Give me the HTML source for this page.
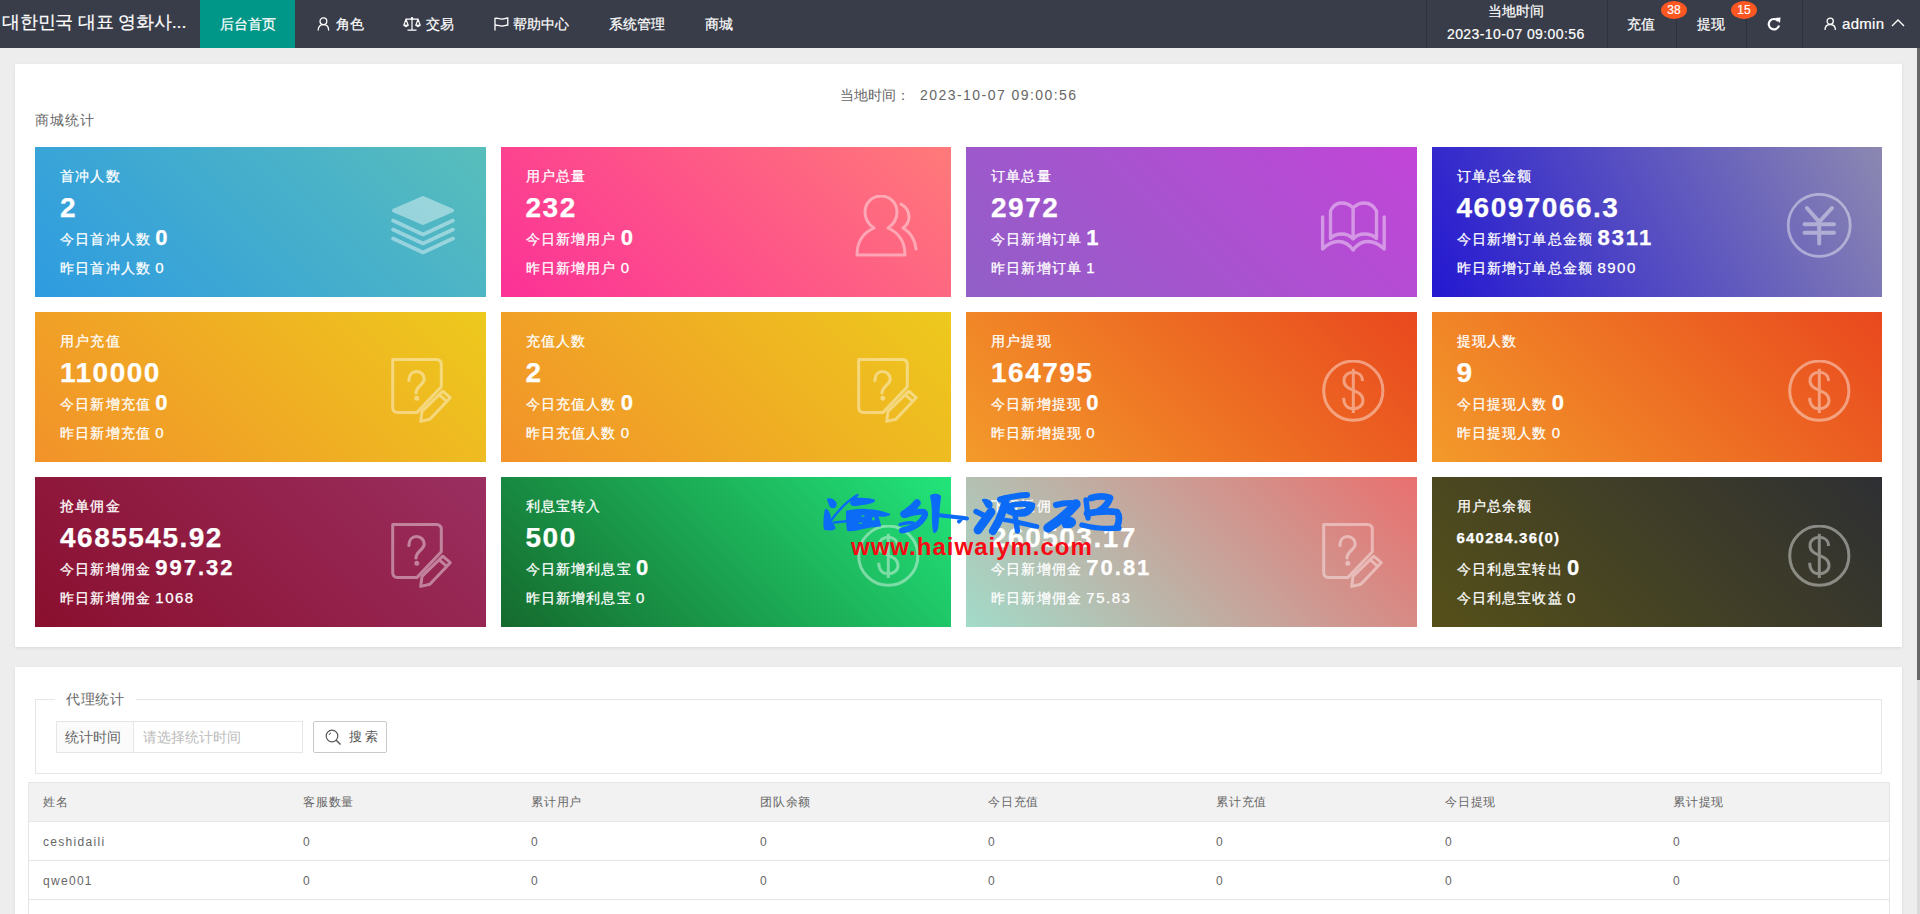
<!DOCTYPE html>
<html><head><meta charset="utf-8">
<style>
*{box-sizing:border-box;margin:0;padding:0}
html,body{width:1920px;height:914px;overflow:hidden}
body{font-family:"Liberation Sans",sans-serif;background:#EDEDED;position:relative;color:#666;font-size:14px}
.hd{position:absolute;left:0;top:0;width:1920px;height:48px;background:#393D49;color:#fff;-webkit-text-stroke:.2px #fff}
.logo{position:absolute;left:2px;top:-1px;height:48px;line-height:46px;font-size:18px;letter-spacing:-.2px;color:#fff;white-space:nowrap}
.ni{position:absolute;top:0;height:48px;line-height:48px;font-size:14px;color:#fff;white-space:nowrap}
.ni.act{background:#009688}
.hic{position:absolute}
.sep{position:absolute;top:0;width:1px;height:48px;background:#2F323C}
.r{position:absolute;color:#fff;white-space:nowrap;font-size:14px}
.badge{position:absolute;top:1px;height:18px;width:26px;border-radius:13px/9px;background:#FF5722;color:#fff;font-size:12px;line-height:18px;text-align:center}
.sb{position:absolute;left:1917px;top:48px;width:3px;height:866px;background:#DADADA}
.sbt{position:absolute;left:1917px;top:48px;width:3px;height:632px;background:#666}
.panel{position:absolute;left:15px;width:1887px;background:#fff;box-shadow:0 1px 3px rgba(0,0,0,.09)}
.card{position:absolute;width:450.5px;height:150px;color:#fff;overflow:hidden;-webkit-text-stroke:.25px #fff}
.card .t{position:absolute;left:25px;top:21px;font-size:14px;line-height:16px;white-space:nowrap;letter-spacing:1.2px}
.card .n{position:absolute;left:25px;top:46px;font-size:28px;font-weight:bold;line-height:30px;white-space:nowrap;letter-spacing:1.5px}
.card .n.small{font-size:15px;top:46px;letter-spacing:1.2px}
.card .l1{position:absolute;left:25px;top:82px;font-size:14px;line-height:20px;white-space:nowrap;letter-spacing:1.2px}
.card .l1 b{margin-left:-1px;font-size:22px;vertical-align:top;line-height:18px;position:relative;top:0;letter-spacing:2px}
.card .l2{position:absolute;left:25px;top:113px;font-size:14px;line-height:16px;white-space:nowrap;letter-spacing:1.2px}
.card .v2{margin-left:-1px;font-size:15px;letter-spacing:1.5px}
.card svg.ic{position:absolute}
.title1{position:absolute;left:840px;top:87px;font-size:14px;line-height:16px;color:#666;white-space:nowrap}
.title2{position:absolute;left:35px;top:112px;font-size:14px;line-height:16px;color:#666;letter-spacing:1px}
.fs{position:absolute;left:35px;top:699px;width:1847px;height:75px;border:1px solid #E6E6E6}
.legend{position:absolute;left:55px;top:690px;padding:0 11px;background:#fff;font-size:14px;line-height:18px;color:#666;letter-spacing:.7px}
.ig{position:absolute;left:56px;top:721px;width:247px;height:32px;border:1px solid #E6E6E6}
.ig .lab{position:absolute;left:0;top:0;width:77px;height:30px;background:#FBFBFB;border-right:1px solid #E6E6E6;line-height:30px;text-align:center;color:#666;text-indent:-4px}
.ig .ph{position:absolute;left:86px;top:0;line-height:30px;color:#BBB}
.btn{position:absolute;left:313px;top:721px;width:74px;height:32px;border:1px solid #C9C9C9;border-radius:2px;line-height:30px;color:#555;font-size:13px}
.tbl{position:absolute;left:28px;top:782px;width:1862px;height:140px;border:1px solid #E6E6E6;border-bottom:none}
.thbg{position:absolute;left:29px;top:783px;width:1860px;height:38px;background:#F2F2F2}
.hl{position:absolute;left:29px;width:1860px;height:1px;background:#E6E6E6}
.th,.td{position:absolute;font-size:12px;line-height:14px;color:#666;white-space:nowrap}
.th{top:795px;letter-spacing:.8px}
.td{margin-top:13px;letter-spacing:1.3px}
.wm1{position:absolute;left:836px;top:492px;font-size:40px;color:#0B6BF6;font-weight:bold;letter-spacing:8.5px;white-space:nowrap;line-height:44px;transform-origin:0 0;transform:scale(1.55,0.95) skewX(-12deg)}
.wm2{position:absolute;left:851px;top:534px;font-size:24px;color:#F70A14;font-weight:bold;white-space:nowrap;line-height:26px;letter-spacing:1px}
</style></head><body>
<div class="hd">
  <div class="logo">대한민국 대표 영화사...</div>
  <div class="ni act" style="left:200px;width:95px;text-align:center">后台首页</div>
  <svg class="hic" style="left:317px;top:17px" width="13" height="14" viewBox="0 0 13 14"><circle cx="6.4" cy="4.3" r="3.4" fill="none" stroke="#fff" stroke-width="1.3"/><path d="M1.2 13 C1.2 9.3 3.5 7.6 6.4 7.6 C9.3 7.6 11.6 9.3 11.6 13" fill="none" stroke="#fff" stroke-width="1.3" stroke-linecap="round"/></svg>
  <div class="ni" style="left:336px">角色</div>
  <svg class="hic" style="left:403px;top:17px" width="18" height="14" viewBox="0 0 18 14"><path d="M9 1.5 L9 13 M4.5 13.2 L13.5 13.2 M2.5 2.2 L15.5 2.2 M3 2.2 L0.9 8 M3 2.2 L5.1 8 M15 2.2 L12.9 8 M15 2.2 L17.1 8" fill="none" stroke="#fff" stroke-width="1.2"/><circle cx="9" cy="1.3" r="1.2" fill="#fff"/><path d="M0.4 8 L5.6 8 Q3 11.5 0.4 8 Z M12.4 8 L17.6 8 Q15 11.5 12.4 8 Z" fill="#fff" stroke="#fff" stroke-width=".8"/></svg>
  <div class="ni" style="left:426px">交易</div>
  <svg class="hic" style="left:494px;top:17px" width="15" height="14" viewBox="0 0 15 14"><path d="M1 0.8 L1 13.5 M1 1.5 C4 0.5 6 2.5 8.5 2 C10.5 1.7 12 1 13.8 1 L13.8 8 C12 8 10.5 8.7 8.5 9 C6 9.5 4 7.5 1 8.5" fill="none" stroke="#fff" stroke-width="1.3"/></svg>
  <div class="ni" style="left:513px">帮助中心</div>
  <div class="ni" style="left:609px">系统管理</div>
  <div class="ni" style="left:705px">商城</div>
  <div class="sep" style="left:1426px"></div>
  <div class="sep" style="left:1607px"></div>
  <div class="sep" style="left:1676px"></div>
  <div class="sep" style="left:1746px"></div>
  <div class="sep" style="left:1802px"></div>
  <div class="r" style="left:1488px;top:3px;line-height:16px">当地时间</div>
  <div class="r" style="left:1447px;top:26px;line-height:16px;letter-spacing:.4px">2023-10-07 09:00:56</div>
  <div class="r" style="left:1627px;top:16px;line-height:16px">充值</div>
  <div class="badge" style="left:1661px">38</div>
  <div class="r" style="left:1697px;top:16px;line-height:16px">提现</div>
  <div class="badge" style="left:1731px">15</div>
  <svg class="hic" style="left:1767px;top:17px" width="14" height="14" viewBox="0 0 14 14"><path d="M11.2 4.2 A5.2 5.2 0 1 0 12 8.5" fill="none" stroke="#fff" stroke-width="2.2"/><path d="M8 1 L13.5 0.5 L13 6 Z" fill="#fff"/></svg>
  <svg class="hic" style="left:1824px;top:17px" width="13" height="14" viewBox="0 0 13 14"><circle cx="6.2" cy="4.2" r="3.1" fill="none" stroke="#fff" stroke-width="1.3"/><path d="M1 13 C1 9.5 3.3 7.5 6.2 7.5 C9.1 7.5 11.4 9.5 11.4 13" fill="none" stroke="#fff" stroke-width="1.3"/></svg>
  <div class="r" style="left:1842px;top:15px;font-size:15px;line-height:18px;letter-spacing:.3px">admin</div>
  <svg class="hic" style="left:1891px;top:18px" width="14" height="9" viewBox="0 0 14 9"><path d="M1 8 L7 2 L13 8" fill="none" stroke="#fff" stroke-width="1.4"/></svg>
</div>
<div class="sb"></div><div class="sbt"></div>

<div class="panel" style="top:64px;height:583px"></div>
<div class="title1">当地时间：</div><div class="title1" style="left:920px;letter-spacing:1.45px">2023-10-07 09:00:56</div>
<div class="title2">商城统计</div>
<div class="card" style="left:35px;top:147px;background:linear-gradient(45deg,#2E9BE1,#58BEBB)">
<div class="t">首冲人数</div><div class="n">2</div>
<div class="l1">今日首冲人数 <b>0</b></div><div class="l2">昨日首冲人数 <span class="v2">0</span></div>
<svg class="ic" style="left:354px;top:49px" width="68" height="62" viewBox="0 0 68 62"><g opacity=".42" fill="none" stroke="#fff" stroke-linecap="round" stroke-linejoin="round"><path d="M34 2 L63 14.5 L34 27 L5 14.5 Z" fill="#fff" stroke-width="4"/><path d="M4 24.5 L34 38.5 L64 24.5 M4 33.5 L34 47.5 L64 33.5 M4 42.5 L34 56.5 L64 42.5" stroke-width="3.6"/></g></svg></div>
<div class="card" style="left:500.5px;top:147px;background:linear-gradient(45deg,#FC3197,#FF7A79)">
<div class="t">用户总量</div><div class="n">232</div>
<div class="l1">今日新增用户 <b>0</b></div><div class="l2">昨日新增用户 <span class="v2">0</span></div>
<svg class="ic" style="left:350px;top:48px" width="72" height="64" viewBox="0 0 72 64"><g opacity=".42" fill="none" stroke="#fff" stroke-linecap="round" stroke-linejoin="round"><path d="M6 60 C6 45 14 37 23 33 C17 29 14 23 14 17 C14 8 21 1 30 1 C39 1 46 8 46 17 C46 23 43 29 37 33 C46 37 54 45 54 60 Z" stroke-width="3"/><path d="M50 9 C55 12 58 16 58 22 C58 27 56 30 52 33 C59 37 64 45 65 54" stroke-width="3"/></g></svg></div>
<div class="card" style="left:966px;top:147px;background:linear-gradient(45deg,#915FC7,#C245D8)">
<div class="t">订单总量</div><div class="n">2972</div>
<div class="l1">今日新增订单 <b>1</b></div><div class="l2">昨日新增订单 <span class="v2">1</span></div>
<svg class="ic" style="left:354px;top:54px" width="68" height="54" viewBox="0 0 68 54"><g opacity=".42" fill="none" stroke="#fff" stroke-linecap="round" stroke-linejoin="round"><path d="M2.6 16 L2.6 48 C8 42.5 13.5 40.5 18.5 40.5 C25 40.5 29.5 44 33.1 49 C36.7 44 41.5 40.5 47.7 40.5 C53 40.5 58.5 42.5 64.2 48 L64.2 16" stroke-width="3.4"/><path d="M10.5 37.5 L10.5 10 C13 4.5 17 2 21.5 2 C26.5 2 30.5 4 33.1 7 C35.7 4 39.7 2 44.7 2 C49.5 2 53.5 4.5 56.5 10 L56.5 37.5 C53 34 49 33 44.7 33 C39.5 33 35.5 35 33.1 38 C30.7 35 26.5 33 21.5 33 C17 33 13.5 34 10.5 37.5 Z M33.1 7 L33.1 37.5" stroke-width="3.4"/></g></svg></div>
<div class="card" style="left:1431.5px;top:147px;background:linear-gradient(63deg,#2418D1,#8C88B1)">
<div class="t">订单总金额</div><div class="n">46097066.3</div>
<div class="l1">今日新增订单总金额 <b>8311</b></div><div class="l2">昨日新增订单总金额 <span class="v2">8900</span></div>
<svg class="ic" style="left:354px;top:46px" width="68" height="68" viewBox="0 0 68 68"><g opacity=".42" fill="none" stroke="#fff" stroke-linecap="round" stroke-linejoin="round"><circle cx="33.2" cy="32.3" r="31" stroke-width="2.8"/><path d="M20.9 15 L33.2 28.8 L46 15 M33.2 28.8 L33.2 50.5 M18.5 31.3 L48 31.3 M18.5 39.7 L48 39.7" stroke-width="4"/></g></svg></div>
<div class="card" style="left:35px;top:312px;background:linear-gradient(45deg,#F2922A,#EDC91D)">
<div class="t">用户充值</div><div class="n">110000</div>
<div class="l1">今日新增充值 <b>0</b></div><div class="l2">昨日新增充值 <span class="v2">0</span></div>
<svg class="ic" style="left:354px;top:46px" width="68" height="68" viewBox="0 0 68 68"><g opacity=".42" fill="none" stroke="#fff" stroke-linecap="round" stroke-linejoin="round"><path d="M27.8 54.6 L8.7 54.6 Q3.7 54.6 3.7 49.6 L3.7 1.6 L47.3 1.6 Q52.3 1.6 52.3 6.6 L52.3 28.8 Z" stroke-width="3"/><path d="M19.9 22.5 C19.9 16.5 23.5 13.5 27.5 13.5 C31.8 13.5 35.2 16.5 35.2 21 C35.2 26.5 27 28.5 27 34.9" stroke-width="3.2"/><circle cx="27.8" cy="40.2" r="1.6" fill="#fff" stroke-width="1.8"/><path d="M53.8 33.2 L61.2 39.7 L40.9 61.2 L31.7 63.4 L33 53.3 Z M50.35 36.8 L57.75 43.3" stroke-width="3"/></g></svg></div>
<div class="card" style="left:500.5px;top:312px;background:linear-gradient(45deg,#F2922A,#EDC91D)">
<div class="t">充值人数</div><div class="n">2</div>
<div class="l1">今日充值人数 <b>0</b></div><div class="l2">昨日充值人数 <span class="v2">0</span></div>
<svg class="ic" style="left:354px;top:46px" width="68" height="68" viewBox="0 0 68 68"><g opacity=".42" fill="none" stroke="#fff" stroke-linecap="round" stroke-linejoin="round"><path d="M27.8 54.6 L8.7 54.6 Q3.7 54.6 3.7 49.6 L3.7 1.6 L47.3 1.6 Q52.3 1.6 52.3 6.6 L52.3 28.8 Z" stroke-width="3"/><path d="M19.9 22.5 C19.9 16.5 23.5 13.5 27.5 13.5 C31.8 13.5 35.2 16.5 35.2 21 C35.2 26.5 27 28.5 27 34.9" stroke-width="3.2"/><circle cx="27.8" cy="40.2" r="1.6" fill="#fff" stroke-width="1.8"/><path d="M53.8 33.2 L61.2 39.7 L40.9 61.2 L31.7 63.4 L33 53.3 Z M50.35 36.8 L57.75 43.3" stroke-width="3"/></g></svg></div>
<div class="card" style="left:966px;top:312px;background:linear-gradient(45deg,#F39A2A,#E9481E)">
<div class="t">用户提现</div><div class="n">164795</div>
<div class="l1">今日新增提现 <b>0</b></div><div class="l2">昨日新增提现 <span class="v2">0</span></div>
<svg class="ic" style="left:356px;top:48px" width="66" height="66" viewBox="0 0 66 66"><g opacity=".42" fill="none" stroke="#fff" stroke-linecap="round" stroke-linejoin="round"><circle cx="31.3" cy="30.7" r="29.6" stroke-width="3"/><path d="M40.5 21 C40.5 15.5 36.5 12.3 31.3 12.3 C25.5 12.3 22 16 22 20.5 C22 26.5 27 28.5 31.3 30.3 C36 32.2 41 34.5 41 40.5 C41 45.5 36.5 48.7 31.3 48.7 C25.5 48.7 21.7 45 21.7 37.7" stroke-width="3" stroke-linecap="butt"/><path d="M31.3 8.8 L31.3 53" stroke-width="3" stroke-linecap="butt"/></g></svg></div>
<div class="card" style="left:1431.5px;top:312px;background:linear-gradient(45deg,#F39A2A,#E9481E)">
<div class="t">提现人数</div><div class="n">9</div>
<div class="l1">今日提现人数 <b>0</b></div><div class="l2">昨日提现人数 <span class="v2">0</span></div>
<svg class="ic" style="left:356px;top:48px" width="66" height="66" viewBox="0 0 66 66"><g opacity=".42" fill="none" stroke="#fff" stroke-linecap="round" stroke-linejoin="round"><circle cx="31.3" cy="30.7" r="29.6" stroke-width="3"/><path d="M40.5 21 C40.5 15.5 36.5 12.3 31.3 12.3 C25.5 12.3 22 16 22 20.5 C22 26.5 27 28.5 31.3 30.3 C36 32.2 41 34.5 41 40.5 C41 45.5 36.5 48.7 31.3 48.7 C25.5 48.7 21.7 45 21.7 37.7" stroke-width="3" stroke-linecap="butt"/><path d="M31.3 8.8 L31.3 53" stroke-width="3" stroke-linecap="butt"/></g></svg></div>
<div class="card" style="left:35px;top:477px;background:linear-gradient(45deg,#8A0F2E,#9A2F60)">
<div class="t">抢单佣金</div><div class="n">4685545.92</div>
<div class="l1">今日新增佣金 <b>997.32</b></div><div class="l2">昨日新增佣金 <span class="v2">1068</span></div>
<svg class="ic" style="left:354px;top:46px" width="68" height="68" viewBox="0 0 68 68"><g opacity=".42" fill="none" stroke="#fff" stroke-linecap="round" stroke-linejoin="round"><path d="M27.8 54.6 L8.7 54.6 Q3.7 54.6 3.7 49.6 L3.7 1.6 L47.3 1.6 Q52.3 1.6 52.3 6.6 L52.3 28.8 Z" stroke-width="3"/><path d="M19.9 22.5 C19.9 16.5 23.5 13.5 27.5 13.5 C31.8 13.5 35.2 16.5 35.2 21 C35.2 26.5 27 28.5 27 34.9" stroke-width="3.2"/><circle cx="27.8" cy="40.2" r="1.6" fill="#fff" stroke-width="1.8"/><path d="M53.8 33.2 L61.2 39.7 L40.9 61.2 L31.7 63.4 L33 53.3 Z M50.35 36.8 L57.75 43.3" stroke-width="3"/></g></svg></div>
<div class="card" style="left:500.5px;top:477px;background:linear-gradient(45deg,#156A2D,#22E57A)">
<div class="t">利息宝转入</div><div class="n">500</div>
<div class="l1">今日新增利息宝 <b>0</b></div><div class="l2">昨日新增利息宝 <span class="v2">0</span></div>
<svg class="ic" style="left:356px;top:48px" width="66" height="66" viewBox="0 0 66 66"><g opacity=".42" fill="none" stroke="#fff" stroke-linecap="round" stroke-linejoin="round"><circle cx="31.3" cy="30.7" r="29.6" stroke-width="3"/><path d="M40.5 21 C40.5 15.5 36.5 12.3 31.3 12.3 C25.5 12.3 22 16 22 20.5 C22 26.5 27 28.5 31.3 30.3 C36 32.2 41 34.5 41 40.5 C41 45.5 36.5 48.7 31.3 48.7 C25.5 48.7 21.7 45 21.7 37.7" stroke-width="3" stroke-linecap="butt"/><path d="M31.3 8.8 L31.3 53" stroke-width="3" stroke-linecap="butt"/></g></svg></div>
<div class="card" style="left:966px;top:477px;background:linear-gradient(45deg,#A2DBC9,#E9706F)">
<div class="t">下级返佣</div><div class="n">260503.17</div>
<div class="l1">今日新增佣金 <b>70.81</b></div><div class="l2">昨日新增佣金 <span class="v2">75.83</span></div>
<svg class="ic" style="left:354px;top:46px" width="68" height="68" viewBox="0 0 68 68"><g opacity=".42" fill="none" stroke="#fff" stroke-linecap="round" stroke-linejoin="round"><path d="M27.8 54.6 L8.7 54.6 Q3.7 54.6 3.7 49.6 L3.7 1.6 L47.3 1.6 Q52.3 1.6 52.3 6.6 L52.3 28.8 Z" stroke-width="3"/><path d="M19.9 22.5 C19.9 16.5 23.5 13.5 27.5 13.5 C31.8 13.5 35.2 16.5 35.2 21 C35.2 26.5 27 28.5 27 34.9" stroke-width="3.2"/><circle cx="27.8" cy="40.2" r="1.6" fill="#fff" stroke-width="1.8"/><path d="M53.8 33.2 L61.2 39.7 L40.9 61.2 L31.7 63.4 L33 53.3 Z M50.35 36.8 L57.75 43.3" stroke-width="3"/></g></svg></div>
<div class="card" style="left:1431.5px;top:477px;background:linear-gradient(45deg,#555019,#2E2F33)">
<div class="t">用户总余额</div><div class="n small">640284.36(0)</div>
<div class="l1">今日利息宝转出 <b>0</b></div><div class="l2">今日利息宝收益 <span class="v2">0</span></div>
<svg class="ic" style="left:356px;top:48px" width="66" height="66" viewBox="0 0 66 66"><g opacity=".42" fill="none" stroke="#fff" stroke-linecap="round" stroke-linejoin="round"><circle cx="31.3" cy="30.7" r="29.6" stroke-width="3"/><path d="M40.5 21 C40.5 15.5 36.5 12.3 31.3 12.3 C25.5 12.3 22 16 22 20.5 C22 26.5 27 28.5 31.3 30.3 C36 32.2 41 34.5 41 40.5 C41 45.5 36.5 48.7 31.3 48.7 C25.5 48.7 21.7 45 21.7 37.7" stroke-width="3" stroke-linecap="butt"/><path d="M31.3 8.8 L31.3 53" stroke-width="3" stroke-linecap="butt"/></g></svg></div>
<svg style="position:absolute;left:815px;top:484px" width="315" height="60" viewBox="0 0 315 60"><g fill="#0B6BF6" stroke="#0B6BF6" stroke-linecap="round" stroke-linejoin="round">
<path stroke-width="2.20" d="M13 15.5 C16 14.5 21 17 20.5 21 C20 24 16 23.5 15 21 C14.5 19 14 17 13 15.5 Z"/>
<path stroke-width="2.20" d="M11 26 C13 27 14.5 30 15 35 C16 38 18 41 19.5 44 C18 46 14 45.5 10 45 C9 41 9.5 36 10 32 C10.3 29 10.5 27 11 26 Z"/>
<path fill="none" stroke-width="2.43" d="M15 38 C22 28 32 17 42.5 11"/>
<path stroke-width="2.20" d="M36 19 C37 15 40 13.5 43 14.5 C48 15.5 54 14.5 59 16.5 C58 19 50 19.5 44 20.5 C40 21.5 37 22 36 19 Z"/>
<path stroke-width="2.20" fill-rule="evenodd" d="M32 27.5 C40 26 48 25.5 52 26 C60 26.5 68 28 74 30.5 C70 32 64 31.5 62 31 L65 41.5 C58 42 52 43 48 44 C42 45.5 36 47 33 46 C32 40 32 33 32 27.5 Z M45.5 30.5 L51 29.8 L50 33.5 L45 34 Z M42.5 38 L48.5 36.8 L48 40.5 L42.5 41 Z M56 32.5 L60.5 32 L61 37 L56 37.5 Z"/>
<path fill="none" stroke-width="2.43" d="M19 38.5 L34 37"/>
<path fill="none" stroke-width="7.43" d="M102 19 C99 23 94 27 89 30"/>
<path fill="none" stroke-width="6.08" d="M90 31 C96 29 103 27 109 28 C112 30 108 36 103 40 C98 43.5 93 45.5 87 46.5"/>
<path fill="none" stroke-width="3.38" d="M85 40.5 C89 39 94 38.5 98 39"/>
<path stroke-width="2.20" d="M116 12 C119 10.5 123 10.5 125 12.5 C124 20 123 30 122.5 40 C122.3 44 121 47.5 119.5 48 C118 46 118 40 118 32 C118 24 117.5 17 116 12 Z"/>
<path fill="none" stroke-width="4.05" d="M121 31 C130 32 140 33 152 34.5 M147 34 L144 37.5"/>
<path stroke-width="2.20" d="M168 16 C172 15.5 177 18 176.5 21.5 C176 24 173 24 171.5 22 C170.5 20 169.5 18 168 16 Z"/>
<path fill="none" stroke-width="8.78" d="M176 28 C172 34 167 40 163 46"/>
<path fill="none" stroke-width="5.40" d="M161 27.5 L169 31.5"/>
<path fill="none" stroke-width="6.08" d="M185 15.5 C195 13 203 11 212 11"/>
<path fill="none" stroke-width="8.10" d="M191 15 C189 25 185 36 178 47"/>
<path stroke-width="2.20" fill-rule="evenodd" d="M192 21 C200 18 212 17 219 20 C220 25 215 30 210 31.5 C203 32 196 31 192 28 Z M197 23 C203 21.5 209 21 213 22.5 C211 25.5 206 27 200 27 Z"/>
<path fill="none" stroke-width="5.40" d="M200 31 L202.5 47"/>
<path fill="none" stroke-width="4.73" d="M190 36 C198 37 210 40 222 42.5"/>
<path fill="none" stroke-width="6.08" d="M241 21 C248 19 255 18.5 262 19.5"/>
<path fill="none" stroke-width="9.45" d="M261 20 C254 28 244 37 233 44"/>
<path stroke-width="2.20" d="M249 34 C254 33 259 34 260 38 C260 42 255 44 249 43 C247 40 247 36 249 34 Z"/>
<path fill="none" stroke-width="6.75" d="M276 14 C283 12 290 12 295 14 C293 20 289 24 284 27"/>
<path fill="none" stroke-width="5.40" d="M271 16 C272 22 272.5 28 273 34"/>
<path fill="none" stroke-width="6.75" d="M272 29.5 C282 27.5 292 26.5 302 28 C305 32 304 38 302 43"/>
<path fill="none" stroke-width="5.40" d="M267 41 C278 44 292 45 304 44"/>
</g></svg>
<div class="wm2">www.haiwaiym.com</div>

<div class="panel" style="top:667px;height:260px"></div>
<div class="fs"></div>
<div class="legend">代理统计</div>
<div class="ig"><div class="lab">统计时间</div><div class="ph">请选择统计时间</div></div>
<div class="btn"><svg style="position:absolute;left:11px;top:7px" width="17" height="17" viewBox="0 0 17 17"><circle cx="7" cy="7" r="5.8" fill="none" stroke="#555" stroke-width="1.2"/><path d="M11 11 L15.5 15.5" stroke="#555" stroke-width="1.4"/><path d="M4 6 A3 3 0 0 1 6 4" fill="none" stroke="#555" stroke-width="1"/></svg><span style="position:absolute;left:35px;top:0;letter-spacing:3px">搜索</span></div>
<div class="tbl"></div>
<div class="thbg"></div>
<div class="hl" style="top:821px"></div>
<div class="hl" style="top:860px"></div>
<div class="hl" style="top:899px"></div>
<div class="th" style="left:43px">姓名</div>
<div class="th" style="left:303px">客服数量</div>
<div class="th" style="left:531px">累计用户</div>
<div class="th" style="left:760px">团队余额</div>
<div class="th" style="left:988px">今日充值</div>
<div class="th" style="left:1216px">累计充值</div>
<div class="th" style="left:1445px">今日提现</div>
<div class="th" style="left:1673px">累计提现</div>
<div class="td" style="left:43px;top:822px">ceshidaili</div>
<div class="td" style="left:303px;top:822px">0</div>
<div class="td" style="left:531px;top:822px">0</div>
<div class="td" style="left:760px;top:822px">0</div>
<div class="td" style="left:988px;top:822px">0</div>
<div class="td" style="left:1216px;top:822px">0</div>
<div class="td" style="left:1445px;top:822px">0</div>
<div class="td" style="left:1673px;top:822px">0</div>
<div class="td" style="left:43px;top:861px">qwe001</div>
<div class="td" style="left:303px;top:861px">0</div>
<div class="td" style="left:531px;top:861px">0</div>
<div class="td" style="left:760px;top:861px">0</div>
<div class="td" style="left:988px;top:861px">0</div>
<div class="td" style="left:1216px;top:861px">0</div>
<div class="td" style="left:1445px;top:861px">0</div>
<div class="td" style="left:1673px;top:861px">0</div>
</body></html>
